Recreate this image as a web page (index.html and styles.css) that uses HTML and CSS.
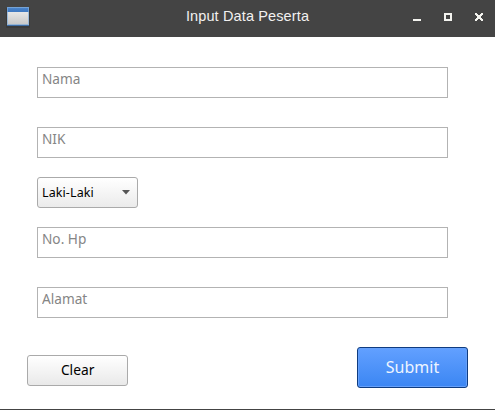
FILE: index.html
```html
<!DOCTYPE html>
<html lang="id">
<head>
<meta charset="utf-8">
<title>Input Data Peserta</title>
<link rel="stylesheet" href="styles.css">
</head>
<body>
<div class="window">
  <header class="titlebar">
    <svg class="app-icon" width="24" height="22" viewBox="0 0 24 22">
      <defs><linearGradient id="pane" x2="0" y2="1"><stop stop-color="#e7e7e7"/><stop offset="1" stop-color="#c6c6c6"/></linearGradient>
      <linearGradient id="bar" x2="0" y2="1"><stop stop-color="#5f94d2"/><stop offset=".3" stop-color="#447fc8"/><stop offset="1" stop-color="#3e76bd"/></linearGradient></defs>
      <rect y="1" width="24" height="20" rx="1" fill="#3a3a3a"/>
      <rect x="1" width="22" height="19" fill="#3e6da5"/>
      <rect x="1" width="22" height="6" fill="url(#bar)"/>
      <rect x="1" y="5" width="22" height="13" fill="url(#pane)"/>
      <path d="M1.5 .5h21v17h-21z" fill="none" stroke="#82acd9" stroke-opacity=".7"/>
    </svg>
    <h1 class="title">Input Data Peserta</h1>
    <div class="controls">
      <svg width="8" height="8"><path d="M0 6h8v2H0z"/></svg>
      <svg width="8" height="8"><path fill-rule="evenodd" d="M0 0h8v8H0zM2 2v4h4V2z"/></svg>
      <svg width="8" height="8" shape-rendering="crispEdges"><path d="M0 0h2v1h1v1h2V1h1V0h2v2H7v1H6v2h1v1h1v2H6V7H5V6H3v1H2v1H0V6h1V5h1V3H1V2H0z"/></svg>
    </div>
  </header>
  <form class="form">
    <div class="field"><span class="hint">Nama</span></div>
    <div class="field"><span class="hint">NIK</span></div>
    <div class="select"><span class="choice">Laki-Laki</span><svg width="8" height="5"><path d="M0 0h8L4 4.5z" fill="#555"/></svg></div>
    <div class="field"><span class="hint">No. Hp</span></div>
    <div class="field"><span class="hint">Alamat</span></div>
  </form>
  <footer class="actions">
    <button class="button clear" type="button"><span>Clear</span></button>
    <button class="button submit" type="button"><span>Submit</span></button>
  </footer>
</div>
</body>
</html>
```

FILE: styles.css
```css
* { box-sizing: border-box; }
body { margin: 0; background: #fff; font-family: "Noto Sans", sans-serif; }
.window { width: 495px; height: 410px; border-bottom: 1px solid #444; overflow: hidden; }
.titlebar { display: grid; grid-template-columns: 80px 1fr 80px; height: 37px; padding: 0 2px 0 6px; background: #444; color: #f2f1f0; }
.app-icon { margin-top: 7px; }
.title { margin: 7px 4px 0 0; font: 14.5px/18px "Liberation Sans", sans-serif; letter-spacing: .13px; text-align: center; white-space: nowrap; }
.controls { display: flex; gap: 23px; margin-top: 13px; fill: #f3f3ef; }
.form { display: flex; flex-direction: column; padding: 30px 47px 0 37px; }
.field { height: 31px; margin-bottom: 29px; padding: 0 4px; border: 1px solid #b3b3b3; line-height: 20px; }
.hint { display: inline-block; color: #858585; font-size: 15px; transform: scaleX(.91); transform-origin: left; }
.select { display: flex; align-items: center; justify-content: space-between; width: 101px; height: 31px; margin: -10px 0 19px; padding: 0 7px 0 4px; border: 1px solid #aaa; border-radius: 3px; background: linear-gradient(#fff, #ebebeb); }
.choice { font-size: 12.5px; letter-spacing: .1px; color: #000; }
.actions { display: flex; justify-content: space-between; padding: 0 27px; }
.button { padding: 0 0 3px; font-family: inherit; border-radius: 3px; }
.button span { display: inline-block; }
.clear { width: 101px; height: 31px; margin-top: 8px; border: 1px solid #aaa; background: linear-gradient(#fff, #e9e9e9); color: #000; font-size: 14.5px; }
.clear span { transform: scaleX(.95); }
.submit { width: 111px; height: 41px; padding-bottom: 1px; border: 1px solid #0f3c80; background: linear-gradient(#62a0ff, #3b86f3); box-shadow: inset 0 0 0 1px #66a0fa; color: #eef5ff; font-size: 16px; }
```
